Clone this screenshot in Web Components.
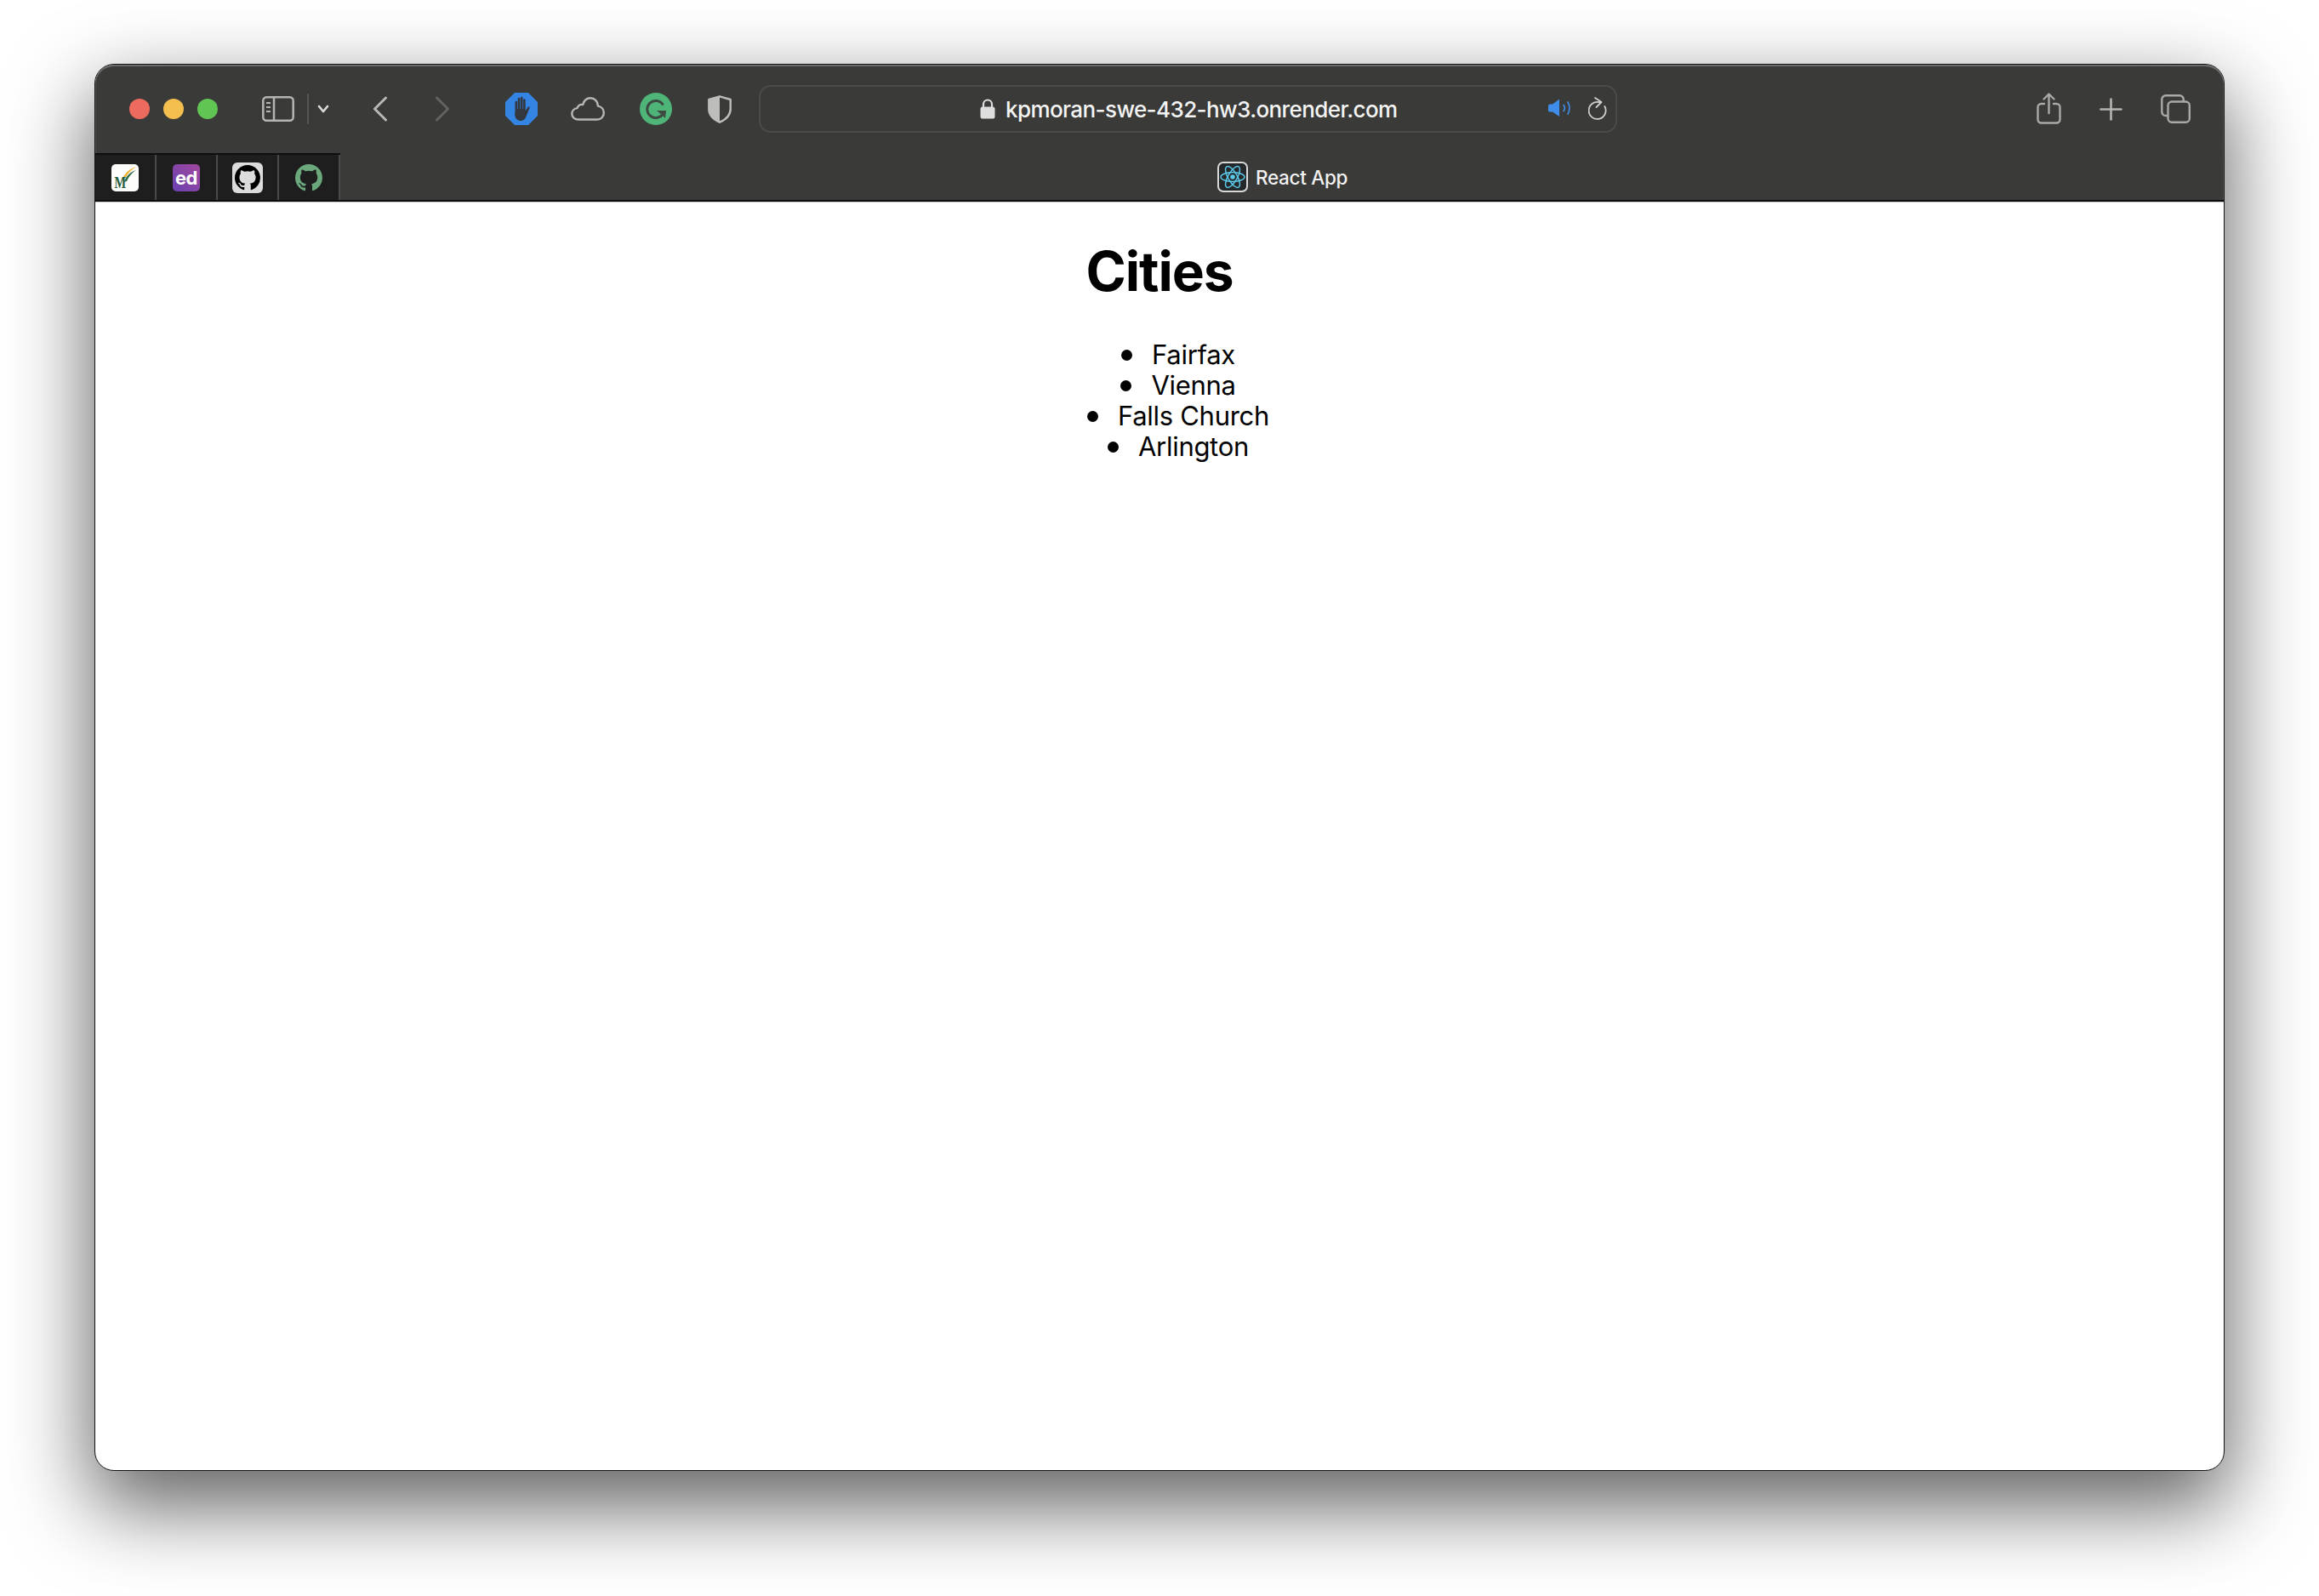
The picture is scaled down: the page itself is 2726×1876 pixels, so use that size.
<!DOCTYPE html>
<html lang="en">
<head>
<meta charset="utf-8">
<title>React App</title>
<style>
  html, body { margin: 0; background: #fff; }
  body { font-family: Inter, "Liberation Sans", sans-serif; width: 2726px; height: 1876px; overflow: hidden; }
</style>
</head>
<body>
<browser-window>
  <browser-toolbar slot="toolbar"></browser-toolbar>
  <pinned-tabs slot="tabs"></pinned-tabs>
  <city-list heading="Cities">
    <city-item>Fairfax</city-item>
    <city-item>Vienna</city-item>
    <city-item>Falls Church</city-item>
    <city-item>Arlington</city-item>
  </city-list>
</browser-window>

<script>
const GITHUB_MARK = 'M8 0C3.58 0 0 3.58 0 8c0 3.54 2.29 6.53 5.47 7.59.4.07.55-.17.55-.38 0-.19-.01-.82-.01-1.49-2.01.37-2.53-.49-2.69-.94-.09-.23-.48-.94-.82-1.13-.28-.15-.68-.52-.01-.53.63-.01 1.08.58 1.23.82.72 1.21 1.87.87 2.33.66.07-.52.28-.87.51-1.07-1.78-.2-3.64-.89-3.64-3.95 0-.87.31-1.59.82-2.15-.08-.2-.36-1.02.08-2.12 0 0 .67-.21 2.2.82.64-.18 1.32-.27 2-.27.68 0 1.36.09 2 .27 1.53-1.04 2.2-.82 2.2-.82.44 1.1.16 1.92.08 2.12.51.56.82 1.27.82 2.15 0 3.07-1.87 3.75-3.65 3.95.29.25.54.73.54 1.48 0 1.07-.01 1.93-.01 2.2 0 .21.15.46.55.38A8.013 8.013 0 0016 8c0-4.42-3.58-8-8-8z';

class BrowserWindow extends HTMLElement {
  constructor() {
    super();
    this.attachShadow({ mode: 'open' });
    this.shadowRoot.innerHTML = `
      <style>
        :host { box-sizing: border-box; width: 2504px; height: 1654px; margin: 75px 0 0 111px;
          display: flex; flex-direction: column; background: #fff; border: 1px solid #111; border-radius: 23px;
          box-shadow: 0 38px 96px 4px rgba(0,0,0,.62); }
        .chrome { background: #3a3a38; border-radius: 22px 22px 0 0; box-shadow: inset 0 2px 0 #6b6b6a, inset 1px 0 0 #555, inset -1px 0 0 #555;
          border-bottom: 2px solid #0c0c0c; }
        .tabrow { display: flex; align-items: stretch; height: 55px; position: relative; }
        .title { position: absolute; top: 10px; left: 1319px; display: flex; align-items: center; gap: 9px;
          color: #f2f2f2; font-size: 22.5px; font-weight: 500; letter-spacing: -.3px; }
        .title svg { display: block; }
        .edge { height: 1px; background: #c8c8c8; }
        main { flex: 1; border-radius: 0 0 22px 22px; }
      </style>
      <div class="chrome">
        <slot name="toolbar"></slot>
        <div class="tabrow">
          <slot name="tabs"></slot>
          <div class="title">
            <svg width="36" height="36" viewBox="0 0 36 36">
              <rect x="1" y="1" width="34" height="34" rx="6" fill="#25282a" stroke="#d8d8d8" stroke-width="2"/>
              <g fill="none" stroke="#5cc8e8" stroke-width="1.500">
                <ellipse cx="18" cy="18" rx="14" ry="5.400"/>
                <ellipse cx="18" cy="18" rx="14" ry="5.400" transform="rotate(60 18 18)"/>
                <ellipse cx="18" cy="18" rx="14" ry="5.400" transform="rotate(120 18 18)"/>
              </g>
              <circle cx="18" cy="18" r="2.800" fill="#5cc8e8"/>
            </svg>
            <span>React App</span>
          </div>
        </div>
      </div>
      <div class="edge"></div>
      <main><slot></slot></main>
    `;
  }
}

class BrowserToolbar extends HTMLElement {
  constructor() {
    super();
    this.attachShadow({ mode: 'open' });
    this.shadowRoot.innerHTML = `
      <style>
        :host { display: flex; align-items: center; box-sizing: border-box; height: 104px; padding-left: 40px; }
        svg { display: block; flex: none; }
        .dots { display: flex; gap: 16px; }
        .dots i { width: 24px; height: 24px; border-radius: 50%; }
        .divider { width: 1.500px; height: 36px; background: #555; margin-left: 15px; }
      </style>
      <div class="dots">
        <i style="background:#ed6a5e"></i><i style="background:#f5bf4f"></i><i style="background:#61c554"></i>
      </div>
      <svg style="margin-left:52px" width="38" height="30" viewBox="0 0 38 30" fill="none" stroke="#b4b4b2" stroke-width="2.500">
        <rect x="1.300" y="1.300" width="35.400" height="27.400" rx="4"/>
        <path d="M14 1.300v27.400"/>
        <path d="M5 8h5M5 13h5M5 18h5" stroke-width="2"/>
      </svg>
      <div class="divider"></div>
      <svg style="margin-left:10.500px" width="14" height="10" viewBox="0 0 14 10" fill="none" stroke="#dcdcdc" stroke-width="2.600" stroke-linecap="round" stroke-linejoin="round">
        <path d="M2 2l5 6 5-6"/>
      </svg>
      <svg style="margin-left:51px" width="18" height="30" viewBox="0 0 18 30" fill="none" stroke="#b8b8b6" stroke-width="3" stroke-linecap="round" stroke-linejoin="round">
        <path d="M15.500 2L2.500 15l13 13"/>
      </svg>
      <svg style="margin-left:55px" width="18" height="30" viewBox="0 0 18 30" fill="none" stroke="#636362" stroke-width="3" stroke-linecap="round" stroke-linejoin="round">
        <path d="M2.500 2l13 13-13 13"/>
      </svg>
      <svg style="margin-left:65px" width="38" height="38" viewBox="0 0 38 38">
        <path d="M11 0h16l11 11v16L27 38H11L0 27V11z" fill="#3484e4"/>
        <path d="M11.500 24V11a1.300 1.300 0 012.600 0v8h.6V7a1.300 1.300 0 012.600 0v12h.6V6a1.300 1.300 0 012.600 0v13h.6V8.500a1.300 1.300 0 012.600 0V21l2.800-4c1-1.400 2.800-.6 2 1l-4 10c-1 2.500-3 5-6.500 5-4.500 0-7-3.500-7-9z" fill="#33383e"/>
      </svg>
      <svg style="margin-left:39px" width="41" height="28" viewBox="0 0 41 28" fill="none" stroke="#b8b8b6" stroke-width="2.400" stroke-linejoin="round">
        <path d="M9 26.500C4.500 26.500 1.300 23.500 1.300 19.800c0-3.500 2.700-6.300 6.200-6.700C8.700 10 11.500 8.500 14.200 9c1.200-4.500 4.600-7.700 8.800-7.700 5 0 8.800 3.900 9 9.300 4.300.8 6.800 4.400 6.800 8 0 4.500-3.300 7.900-7.800 7.900z"/>
      </svg>
      <svg style="margin-left:40px" width="38" height="38" viewBox="0 0 38 38">
        <circle cx="19" cy="19" r="19" fill="#4fb477"/>
        <path d="M27.500 14.500A10 10 0 1 0 28.500 22" fill="none" stroke="#3d4a42" stroke-width="3"/>
        <path d="M20 21h11l-1 9-3.500-3.500z" fill="#3d4a42"/>
      </svg>
      <svg style="margin-left:42px" width="28" height="33" viewBox="0 0 28 33">
        <path d="M14 1.300L26.700 5v11c0 7.500-5.500 12.500-12.700 15.700C6.800 28.500 1.300 23.500 1.300 16V5z" fill="none" stroke="#bdbdbb" stroke-width="2.400" stroke-linejoin="round"/>
        <path d="M14 1.300L1.300 5v11c0 7.500 5.500 12.500 12.700 15.700z" fill="#bdbdbb"/>
      </svg>
      <address-bar style="margin-left:32px">kpmoran-swe-432-hw3.onrender.com</address-bar>
      <svg style="margin-left:493px;margin-top:-2px" width="29" height="37" viewBox="0 0 29 37" fill="none" stroke="#a9a9a7" stroke-width="2.400" stroke-linecap="round" stroke-linejoin="round">
        <path d="M9 13H5.500a4 4 0 00-4 4v14.500a4 4 0 004 4h18a4 4 0 004-4V17a4 4 0 00-4-4H20"/>
        <path d="M14.500 24V2M8.500 7.500l6-6 6 6"/>
      </svg>
      <svg style="margin-left:45px" width="27" height="27" viewBox="0 0 27 27" fill="none" stroke="#b4b4b2" stroke-width="2.600" stroke-linecap="round">
        <path d="M13.500 1.500v24M1.500 13.500h24"/>
      </svg>
      <svg style="margin-left:45px" width="35" height="34" viewBox="0 0 35 34" fill="none" stroke="#a9a9a7" stroke-width="2.400">
        <path d="M8 25H6a4.500 4.500 0 01-4.700-4.500V6A4.500 4.500 0 016 1.300h16A4.500 4.500 0 0126.700 6v2"/>
        <rect x="8.500" y="8.500" width="25.300" height="24.300" rx="4.500"/>
      </svg>
    `;
  }
}

class AddressBar extends HTMLElement {
  constructor() {
    super();
    this.attachShadow({ mode: 'open' });
    this.shadowRoot.innerHTML = `
      <style>
        :host { display: flex; align-items: center; box-sizing: border-box; width: 1009px; height: 56px; flex: none;
          padding: 0 10px 0 258px; border: 2px solid #4b4b49; border-radius: 14px; color: #f4f4f4; }
        .url { margin-left: 12px; font-size: 26px; font-weight: 500; letter-spacing: -.6px; white-space: nowrap; flex: 1; padding-top: 1px; }
        svg { display: block; flex: none; }
      </style>
      <svg width="18" height="24" viewBox="0 0 18 24">
        <rect x="0.500" y="9.500" width="17" height="14" rx="2.500" fill="#dedede"/>
        <path d="M4 10V6.500a5 5 0 0110 0V10" fill="none" stroke="#dedede" stroke-width="2.200"/>
      </svg>
      <span class="url"><slot></slot></span>
      <svg style="margin-top:-3px" width="27" height="22" viewBox="0 0 27 22">
        <path d="M0 8Q0 6.500 2 6.500H5L13 .5V21L5 15.500H2Q0 15.500 0 14z" fill="#3f8dea"/>
        <path d="M18 7.500c1.500 2 1.500 5 0 7M23 4c2.500 4 2.500 10 0 14" fill="none" stroke="#3f8dea" stroke-width="1.700" stroke-linecap="round"/>
      </svg>
      <svg style="margin-left:20px;margin-top:-2px" width="22" height="27" viewBox="0 0 22 27" fill="none" stroke="#cfcfcf" stroke-width="1.800" stroke-linecap="round" stroke-linejoin="round">
        <path d="M13 6.200A10 10 0 1 0 19.300 11M8 1l7.500 5-6 6"/>
      </svg>
    `;
  }
}

class PinnedTabs extends HTMLElement {
  constructor() {
    super();
    this.attachShadow({ mode: 'open' });
    this.shadowRoot.innerHTML = `
      <style>
        :host { display: flex; height: 55px; border-top: 2px solid #0e0e0e; box-sizing: border-box; }
        .tab { display: flex; align-items: center; justify-content: center; box-sizing: border-box; width: 72px; height: 100%;
          background: #1e1e1e; border-right: 2px solid #4a4a4a; }
        .tab:first-child { width: 71px; }
        svg { display: block; }
        .ed { display: flex; align-items: center; justify-content: center; width: 32px; height: 32px; border-radius: 5px;
          background: linear-gradient(45deg, #6a42b0, #a2479f); color: #fff; font: 700 22px Inter, sans-serif; letter-spacing: -.5px; }
      </style>
      <div class="tab">
        <svg width="32" height="32" viewBox="0 0 32 32">
          <rect width="32" height="32" rx="5" fill="#fdfdfb"/>
          <path d="M14 15C17 9 23 5 29 3c-5 3-9 7-12 12z" fill="#f2b233"/>
          <path d="M15 21C17 14 22 9 29 7c-5 3-9 8-11 13z" fill="#2f6b45"/>
          <text transform="translate(3.500 28) scale(.8 1)" font-family="'Liberation Serif', serif" font-weight="700" font-size="18" fill="#1f5c3a">M</text>
        </svg>
      </div>
      <div class="tab"><div class="ed">ed</div></div>
      <div class="tab">
        <svg width="36" height="36" viewBox="0 0 36 36">
          <rect width="36" height="36" rx="6" fill="#dcdcdc"/>
          <svg x="3" y="3" width="30" height="30" viewBox="0 0 16 16"><path d="${GITHUB_MARK}" fill="#000"/></svg>
        </svg>
      </div>
      <div class="tab">
        <svg width="32" height="32" viewBox="0 0 16 16"><path d="${GITHUB_MARK}" fill="#6ba97c"/></svg>
      </div>
    `;
  }
}

class CityList extends HTMLElement {
  constructor() {
    super();
    this.attachShadow({ mode: 'open' });
    this.shadowRoot.innerHTML = `
      <style>
        :host { display: block; text-align: center; color: #000; }
        h1 { margin: 0; padding-top: 42px; font-size: 64px; line-height: 77px; font-weight: 700; letter-spacing: -1.1px; }
        .list { margin-top: 42px; padding-left: 80px; font-size: 31px; line-height: 36px; letter-spacing: -.3px; }
      </style>
      <h1></h1>
      <div class="list" role="list"><slot></slot></div>
    `;
    this.shadowRoot.querySelector('h1').textContent = this.getAttribute('heading');
  }
}

// text is centered but the bullet stays right next to it, like Safari draws an outside marker
class CityItem extends HTMLElement {
  constructor() {
    super();
    this.attachShadow({ mode: 'open' });
    this.shadowRoot.innerHTML = `
      <style>
        :host { display: block; }
        span { position: relative; display: inline-block; }
        span::before { content: ''; position: absolute; right: 100%; bottom: 11px; margin-right: 23px;
          width: 13px; height: 13px; border-radius: 50%; background: #000; }
      </style>
      <span><slot></slot></span>
    `;
    this.setAttribute('role', 'listitem');
  }
}

customElements.define('browser-window', BrowserWindow);
customElements.define('browser-toolbar', BrowserToolbar);
customElements.define('address-bar', AddressBar);
customElements.define('pinned-tabs', PinnedTabs);
customElements.define('city-list', CityList);
customElements.define('city-item', CityItem);
</script>
</body>
</html>
